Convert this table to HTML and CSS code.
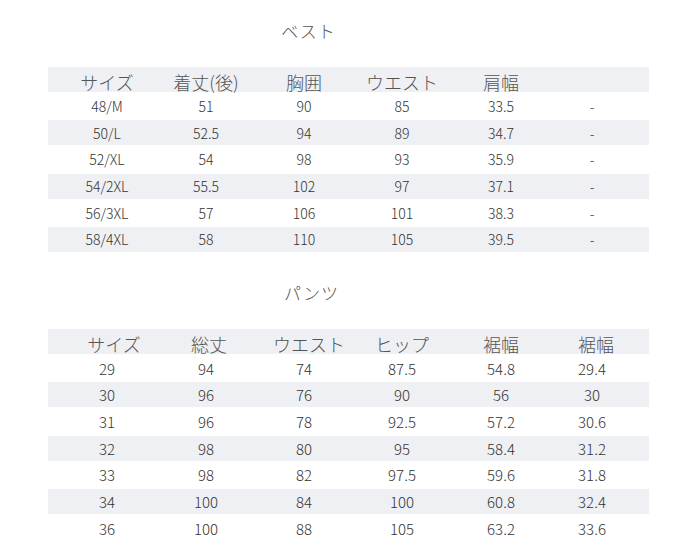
FILE: index.html
```html
<!DOCTYPE html>
<html lang="ja">
<head>
<meta charset="utf-8">
<title>サイズ表</title>
<link rel="stylesheet" href="styles.css">
</head>
<body>
<div class="page">
  <h2 class="title first">ベスト</h2>
  <div class="table vest">
    <div class="row head"><span>サイズ</span><span>着丈(後)</span><span>胸囲</span><span>ウエスト</span><span>肩幅</span><span></span></div>
    <div class="row"><span>48/M</span><span>51</span><span>90</span><span>85</span><span>33.5</span><span>-</span></div>
    <div class="row"><span>50/L</span><span>52.5</span><span>94</span><span>89</span><span>34.7</span><span>-</span></div>
    <div class="row"><span>52/XL</span><span>54</span><span>98</span><span>93</span><span>35.9</span><span>-</span></div>
    <div class="row"><span>54/2XL</span><span>55.5</span><span>102</span><span>97</span><span>37.1</span><span>-</span></div>
    <div class="row"><span>56/3XL</span><span>57</span><span>106</span><span>101</span><span>38.3</span><span>-</span></div>
    <div class="row"><span>58/4XL</span><span>58</span><span>110</span><span>105</span><span>39.5</span><span>-</span></div>
  </div>

  <h2 class="title second">パンツ</h2>
  <div class="table pants">
    <div class="row head"><span class="s1">サイズ</span><span class="s2">総丈</span><span class="s3">ウエスト</span><span>ヒップ</span><span>裾幅</span><span class="s6">裾幅</span></div>
    <div class="row"><span>29</span><span>94</span><span>74</span><span>87.5</span><span>54.8</span><span>29.4</span></div>
    <div class="row"><span>30</span><span>96</span><span>76</span><span>90</span><span>56</span><span>30</span></div>
    <div class="row"><span>31</span><span>96</span><span>78</span><span>92.5</span><span>57.2</span><span>30.6</span></div>
    <div class="row"><span>32</span><span>98</span><span>80</span><span>95</span><span>58.4</span><span>31.2</span></div>
    <div class="row"><span>33</span><span>98</span><span>82</span><span>97.5</span><span>59.6</span><span>31.8</span></div>
    <div class="row"><span>34</span><span>100</span><span>84</span><span>100</span><span>60.8</span><span>32.4</span></div>
    <div class="row"><span>36</span><span>100</span><span>88</span><span>105</span><span>63.2</span><span>33.6</span></div>
  </div>
</div>
</body>
</html>
```

FILE: styles.css
```css
html, body {
  margin: 0;
  padding: 0;
  background: #ffffff;
}

body {
  font-family: "Noto Sans CJK JP", "Noto Sans", sans-serif;
  font-weight: 300;
  color: #333333;
}

.page {
  width: 601px;
  padding: 0 51px 0 48px;
}

.title {
  margin: 0;
  height: 24px;
  line-height: 24px;
  font-size: 17px;
  font-weight: 300;
  color: #555555;
  text-align: center;
  letter-spacing: 1px;
}

.title.first {
  margin-top: 19px;
  margin-bottom: 24px;
  padding-right: 80px;
}

.title.second {
  margin-top: 29px;
  margin-bottom: 24px;
  padding-right: 74px;
}

.table {
  display: flex;
  flex-direction: column;
}

.row {
  display: grid;
  grid-template-columns: 98px 100px 96px 100px 98px 84px;
  padding: 0 15px 0 10px;
  height: 28.33px;
  align-items: center;
  font-size: 14px;
  color: #333333;
}

.row span {
  text-align: center;
  white-space: nowrap;
}

.row:nth-child(odd) {
  height: 25px;
  background: #eff0f4;
}

.row.head {
  font-size: 18px;
  color: #555555;
  padding-top: 2px;
  box-sizing: border-box;
}

.pants .row {
  font-size: 15px;
}

.pants .row.head {
  font-size: 18px;
}

.pants .head .s1 {
  padding-left: 14px;
}

.pants .head .s2 {
  padding-left: 6px;
}

.pants .head .s3 {
  padding-left: 10px;
}

.pants .head .s6 {
  padding-left: 8px;
}
```
